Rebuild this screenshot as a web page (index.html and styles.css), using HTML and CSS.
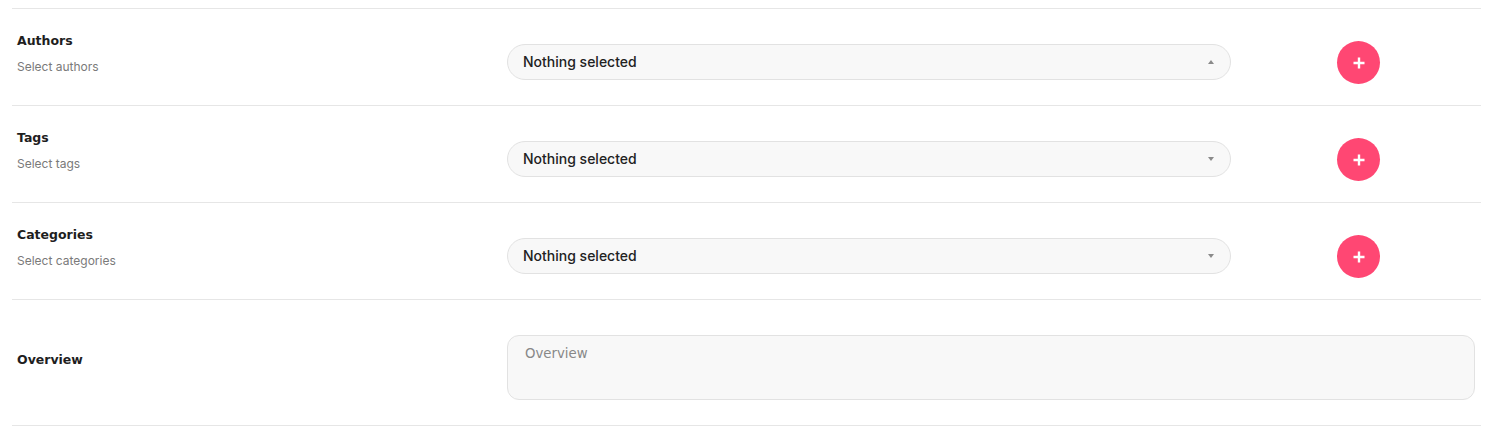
FILE: index.html
```html
<!DOCTYPE html>
<html lang="en">
<head>
<meta charset="utf-8">
<title>Form</title>
<link rel="stylesheet" href="styles.css">
</head>
<body>
<div class="form">
  <div class="row">
    <div class="label">
      <div class="title">Authors</div>
      <div class="sub">Select authors</div>
    </div>
    <div class="select"><span>Nothing selected</span><i class="caret up"></i></div>
    <div class="action"><button class="add" type="button"><svg width="12" height="12" viewBox="0 0 12 12"><path d="M6 0.5v11M0.5 6h11" stroke="#fff" stroke-width="2.4" fill="none"/></svg></button></div>
  </div>
  <div class="row">
    <div class="label">
      <div class="title">Tags</div>
      <div class="sub">Select tags</div>
    </div>
    <div class="select"><span>Nothing selected</span><i class="caret down"></i></div>
    <div class="action"><button class="add" type="button"><svg width="12" height="12" viewBox="0 0 12 12"><path d="M6 0.5v11M0.5 6h11" stroke="#fff" stroke-width="2.4" fill="none"/></svg></button></div>
  </div>
  <div class="row">
    <div class="label">
      <div class="title">Categories</div>
      <div class="sub">Select categories</div>
    </div>
    <div class="select"><span>Nothing selected</span><i class="caret down"></i></div>
    <div class="action"><button class="add" type="button"><svg width="12" height="12" viewBox="0 0 12 12"><path d="M6 0.5v11M0.5 6h11" stroke="#fff" stroke-width="2.4" fill="none"/></svg></button></div>
  </div>
  <div class="row row-tall">
    <div class="label label-mid">
      <div class="title">Overview</div>
    </div>
    <div class="textarea">Overview</div>
  </div>
</div>
</body>
</html>
```

FILE: styles.css
```css
html, body {
  margin: 0;
  padding: 0;
  background: #ffffff;
}

.form {
  padding: 8px 16px 0 12px;
}

.row {
  display: grid;
  grid-template-columns: 495px 724px 1fr;
  align-items: start;
  height: 97px;
  box-sizing: border-box;
  border-top: 1px solid #e6e6e6;
}

.row-tall {
  height: 127px;
  border-bottom: 1px solid #e6e6e6;
}

.label {
  padding: 23px 0 0 5px;
}

.label-mid {
  padding-top: 51px;
}

.title {
  font-family: "DejaVu Sans", sans-serif;
  font-weight: 700;
  font-size: 12.5px;
  line-height: 18px;
  color: #1e1e1e;
}

.sub {
  margin-top: 9px;
  font-family: Inter, sans-serif;
  font-size: 12px;
  line-height: 16px;
  color: #7a7a7a;
}

.select {
  margin-top: 35px;
  height: 36px;
  box-sizing: border-box;
  border: 1px solid #e2e2e2;
  border-radius: 18px;
  background: #f8f8f8;
  display: flex;
  align-items: center;
  justify-content: space-between;
  padding: 0 16px 1px 15px;
  font-family: Inter, sans-serif;
  font-weight: 500;
  font-size: 14px;
  color: #222222;
}

.caret {
  width: 0;
  height: 0;
  border-left: 3.5px solid transparent;
  border-right: 3.5px solid transparent;
}

.caret.up {
  border-bottom: 4px solid #8a8a8a;
}

.caret.down {
  border-top: 4px solid #8a8a8a;
}

.action {
  display: flex;
  justify-content: center;
  padding-left: 5px;
  margin-top: 32px;
}

.add {
  width: 43px;
  height: 43px;
  border-radius: 50%;
  border: none;
  padding: 0;
  background: #ff4773;
  display: flex;
  align-items: center;
  justify-content: center;
}

.textarea {
  grid-column: 2 / 4;
  margin: 35px 6px 0 0;
  height: 65px;
  box-sizing: border-box;
  border: 1px solid #e2e2e2;
  border-radius: 12px;
  background: #f8f8f8;
  padding: 9px 17px;
  font-family: "DejaVu Sans", sans-serif;
  font-size: 13.3px;
  line-height: 18px;
  color: #888888;
}
```
